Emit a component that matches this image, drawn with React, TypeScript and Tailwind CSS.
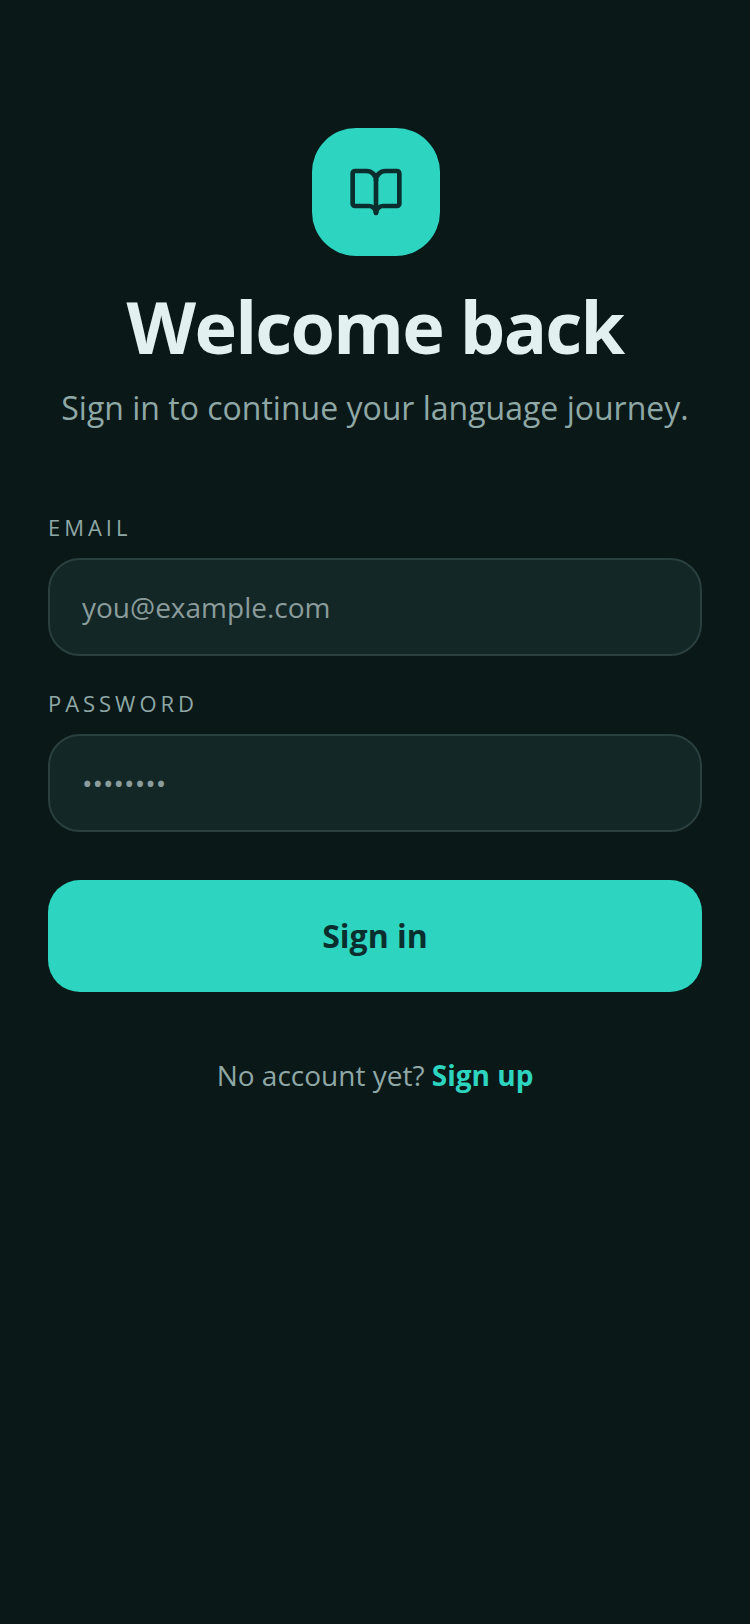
import { BookOpen } from 'lucide-react';

export default function App() {
  return (
    <div className="min-h-[1624px] bg-[#0a1818] px-12 pt-32 font-['Open_Sans',sans-serif]">
      <div className="flex flex-col items-center">
        <div className="ml-0.5 flex h-32 w-32 items-center justify-center rounded-[44px] bg-[#2dd4bf]">
          <BookOpen className="h-14 w-14 text-[#0a2e2e]" strokeWidth={2} />
        </div>
        <h1 className="mt-8 text-[72px] leading-[76px] font-bold tracking-[-1.8px] whitespace-nowrap text-[#e2f0ef]">
          Welcome back
        </h1>
        <p className="mt-5 text-[32px] leading-[48px] whitespace-nowrap text-[#8fa8a6]">
          Sign in to continue your language journey.
        </p>
      </div>

      <form className="mt-20">
        <label className="block text-[22px] leading-[30px] tracking-[3.96px] text-[#8fa8a6]">EMAIL</label>
        <input
          type="email"
          placeholder="you@example.com"
          className="mt-4 block h-[98px] w-full rounded-[32px] border-2 border-[#2a4040] bg-[#142727] px-8 text-[28px] text-[#e2f0ef] outline-none placeholder:text-[#8a9c9b]"
        />
        <label className="mt-8 block text-[22px] leading-[30px] tracking-[3.96px] text-[#8fa8a6]">PASSWORD</label>
        <input
          type="password"
          placeholder="••••••••"
          className="mt-4 block h-[98px] w-full rounded-[32px] border-2 border-[#2a4040] bg-[#142727] px-8 text-[28px] text-[#e2f0ef] outline-none placeholder:text-[#8a9c9b]"
        />
        <button
          type="button"
          className="mt-12 block h-[112px] w-full rounded-[32px] bg-[#2dd4bf] text-[32px] font-bold text-[#0a2e2e]"
        >
          Sign in
        </button>
      </form>

      <p className="mt-16 text-center text-[28px] leading-[38px] text-[#8fa8a6]">
        No account yet? <a className="font-bold text-[#2dd4bf]">Sign up</a>
      </p>
    </div>
  );
}
